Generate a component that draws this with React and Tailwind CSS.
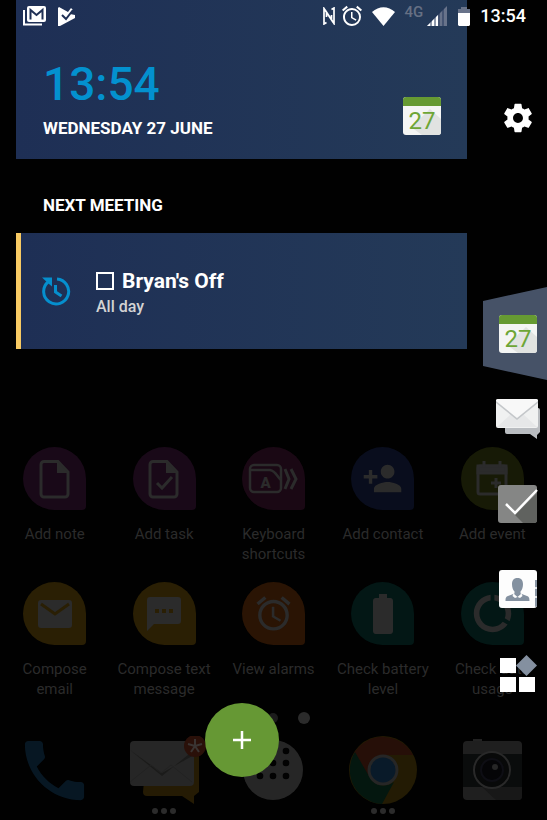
import React, { useState } from "react";
import { MdPersonAdd, MdAlarm, MdDataUsage, MdPhone, MdBatteryFull } from "react-icons/md";

function GearIcon() {
  return (
    <svg width="34" height="34" viewBox="0 0 24 24" fill="currentColor" aria-hidden="true">
      <path d="M19.43 12.98c.04-.32.07-.64.07-.98s-.03-.66-.07-.98l2.11-1.65c.19-.15.24-.42.12-.64l-2-3.46c-.12-.22-.39-.3-.61-.22l-2.49 1c-.52-.4-1.08-.73-1.69-.98l-.38-2.65C14.46 2.18 14.25 2 14 2h-4c-.25 0-.46.18-.49.42l-.38 2.65c-.61.25-1.17.59-1.69.98l-2.49-1c-.23-.09-.49 0-.61.22l-2 3.46c-.13.22-.07.49.12.64l2.11 1.65c-.04.32-.07.65-.07.98s.03.66.07.98l-2.11 1.65c-.19.15-.24.42-.12.64l2 3.46c.12.22.39.3.61.22l2.49-1c.52.4 1.08.73 1.69.98l.38 2.65c.03.24.24.42.49.42h4c.25 0 .46-.18.49-.42l.38-2.65c.61-.25 1.17-.59 1.69-.98l2.49 1c.23.09.49 0 .61-.22l2-3.46c.12-.22.07-.49-.12-.64l-2.11-1.65zM12 15.5c-1.93 0-3.5-1.57-3.5-3.5s1.57-3.5 3.5-3.5 3.5 1.57 3.5 3.5-1.57 3.5-3.5 3.5z" />
    </svg>
  );
}

function CalendarIcon() {
  return (
    <svg width="40" height="40" viewBox="0 0 40 40" aria-hidden="true">
      <rect x="1" y="1" width="38" height="38" rx="3" fill="#f4f5f4" />
      <path d="M28 13 39 23v13a3 3 0 0 1-3 3H20L9 31z" fill="#e1e3e1" />
      <path d="M1 10V4a3 3 0 0 1 3-3h32a3 3 0 0 1 3 3v6z" fill="#669a32" />
      <text x="20" y="33" textAnchor="middle" fontFamily="Roboto, sans-serif" fontSize="24" fill="#6ea636">27</text>
    </svg>
  );
}

function MessagesIcon() {
  return (
    <svg width="44" height="40" viewBox="0 0 44 40" aria-hidden="true">
      <path d="M9 9h33a2 2 0 0 1 2 2v22l-3 3v4l-7-5H11a2 2 0 0 1-2-2z" fill="#b9bcc0" />
      <rect x="0" y="0" width="42" height="29" rx="2" fill="#f0f1f1" />
      <path d="M1 28 15 15h12l14 13z" fill="#e6e7e8" />
      <path d="M0 4 21 21 42 4v-2L40 0H2L0 2z" fill="#c4c7ca" />
      <path d="M0 2a2 2 0 0 1 2-2h38a2 2 0 0 1 2 2L21 19z" fill="#f8f8f8" />
    </svg>
  );
}

function TasksIcon() {
  return (
    <svg width="40" height="40" viewBox="0 0 40 40" aria-hidden="true">
      <rect x="0" y="1" width="39" height="38" rx="3" fill="#858685" />
      <path d="M39 9v27a3 3 0 0 1-3 3H25l-8-8z" fill="#60625f" />
      <path d="M8 20 17 29 39 6" fill="none" stroke="#fff" strokeWidth="2.500" />
    </svg>
  );
}

function PeopleIcon() {
  return (
    <svg width="38" height="38" viewBox="0 0 38 38" aria-hidden="true">
      <rect width="38" height="38" rx="3" fill="#fdfdfd" />
      <path d="M36 10h2v26l-2 1z" fill="#8894a2" />
      <path d="M35 18h3M35 27h3" stroke="#fff" strokeWidth="1.5" />
      <path d="M18.500 8c4 0 5.500 2.700 5.500 6.300 0 3.200-1 5.700-2.500 7.200v2l6.500 2.500c1.800.7 2.500 1.500 2.500 5h-24c0-3.500.7-4.300 2.500-5l6.500-2.500v-2c-1.500-1.500-2.500-4-2.500-7.200 0-3.600 1.500-6.300 5.500-6.300z" fill="#8491a0" />
      <path d="m14.500 23.500 4 3.500 4-3.500 1 2.500-2.500 2-2.500-1-2.500 1-2.500-2z" fill="#fdfdfd" />
    </svg>
  );
}

function WidgetsIcon() {
  return (
    <svg width="38" height="38" viewBox="0 0 38 38" aria-hidden="true">
      <path d="M1 3h16v15H1zM1 22h16v15H1zM20 22h16v15H20z" fill="#fff" />
      <path d="M27.500 0 38 10.500 27.500 21 17 10.500z" fill="#8490a0" />
    </svg>
  );
}

function NoteGlyph({ checked }) {
  return (
    <svg width="32" height="40" viewBox="0 0 32 40" fill="none" stroke="currentColor" strokeWidth="3">
      <path d="M5 2.500h14L29 13v22a3 3 0 0 1-3 3H5a3 3 0 0 1-3-3V5.500a3 3 0 0 1 3-3z" />
      <path d="M18 2.500V14h11L19 3z" fill="currentColor" stroke="none" />
      {checked && <path d="m9 24 5 5 10-11" />}
    </svg>
  );
}

function KeyboardGlyph() {
  return (
    <svg width="50" height="32" viewBox="0 0 50 32" fill="none" stroke="currentColor" strokeWidth="2.500">
      <rect x="2" y="2" width="31" height="27" rx="4" />
      <path d="M2 7h20c6 1 7 7 11 10" />
      <text x="17.500" y="25" textAnchor="middle" fontFamily="Roboto, sans-serif" fontWeight="900" fontSize="15" fill="currentColor" stroke="none">A</text>
      <path d="m37 6 4 10-4 10M43 6l5 10-5 10" strokeWidth="3" />
    </svg>
  );
}

function EventGlyph() {
  return (
    <svg width="32" height="36" viewBox="0 0 32 36" fill="none" stroke="currentColor" strokeWidth="3">
      <rect x="2" y="5" width="28" height="28" rx="2" />
      <path d="M2 5h28v7H2z" fill="currentColor" />
      <path d="M8 0v6M24 0v6M20 17v10M15 22h10" />
    </svg>
  );
}

function MailGlyph() {
  return (
    <svg width="36" height="30" viewBox="0 0 36 30">
      <rect x="1" y="1" width="34" height="28" rx="3" fill="currentColor" />
      <path d="m4 5 14 10L32 5" fill="none" stroke="#2a1f04" strokeWidth="3" />
    </svg>
  );
}

function SmsGlyph() {
  return (
    <svg width="34" height="34" viewBox="0 0 34 34">
      <path d="M3 0h28a3 3 0 0 1 3 3v21a3 3 0 0 1-3 3H7l-7 7V3a3 3 0 0 1 3-3z" fill="currentColor" />
      <path d="M8 12h4v4H8zM15 12h4v4h-4zM22 12h4v4h-4z" fill="#2a1f04" />
    </svg>
  );
}

const shortcuts = [
  { label: "Add note", bg: "bg-[#190918]", icon: <NoteGlyph /> },
  { label: "Add task", bg: "bg-[#190918]", icon: <NoteGlyph checked /> },
  { label: "Keyboard shortcuts", bg: "bg-[#1a0814]", icon: <KeyboardGlyph /> },
  { label: "Add contact", bg: "bg-[#090d1d]", icon: <MdPersonAdd size={41} /> },
  { label: "Add event", bg: "bg-[#171a06]", icon: <EventGlyph /> },
  { label: "Compose email", bg: "bg-[#2a1f04]", icon: <MailGlyph /> },
  { label: "Compose text message", bg: "bg-[#2a1f04]", icon: <SmsGlyph /> },
  { label: "View alarms", bg: "bg-[#2a1404]", icon: <MdAlarm size={41} /> },
  { label: "Check battery level", bg: "bg-[#031715]", icon: <MdBatteryFull size={48} /> },
  { label: "Check data usage", bg: "bg-[#031715]", icon: <MdDataUsage size={45} /> },
];

function Shortcut({ label, bg, icon }) {
  return (
    <button className="flex flex-col items-center">
      <span className={`${bg} flex size-[63px] items-center justify-center rounded-[32px_32px_4px_32px] text-[#2b2b2b]`}>
        {icon}
      </span>
      <span className="mt-[14px] w-[104px] text-[15px] leading-5 text-[#2b2b2b]">{label}</span>
    </button>
  );
}

function DockMessages() {
  return (
    <svg width="84" height="68" viewBox="0 0 84 68" aria-hidden="true">
      <path d="M25 12h48a4 4 0 0 1 4 4v40l-5 4v8l-12-8H25a4 4 0 0 1-4-4z" fill="#251b04" />
      <rect x="8" y="5" width="64" height="45" rx="4" fill="#262626" />
      <path d="M8 14 40 40 72 14v5L40 37z" fill="#1b1b1a" />
      <path d="m8 46 21-17 10 8 10-8 21 17" fill="none" stroke="#222" />
      <circle cx="73" cy="10" r="11" fill="#2a1009" />
      <path d="M73 10V3M73 10l-7-2M73 10l7-2M73 10l-4 6M73 10l4 6" stroke="#3a3432" strokeWidth="2" />
    </svg>
  );
}

function DockDrawer() {
  return (
    <svg width="68" height="68" viewBox="0 0 68 68" aria-hidden="true">
      <circle cx="34" cy="34" r="30" fill="#262626" />
      {[15, 27, 40].map((y) =>
        [21, 34, 47].map((x) => <circle key={`${x}-${y}`} cx={x} cy={y} r="3.300" fill="#020202" />)
      )}
    </svg>
  );
}

function DockChrome() {
  return (
    <svg width="68" height="68" viewBox="0 0 68 68" aria-hidden="true">
      <circle cx="34" cy="34" r="34" fill="#231b04" />
      <path d="M5 17a34 34 0 0 1 59 2H34L20 43z" fill="#260f08" />
      <path d="M6 16 21 42c5 8 15 10 24 4L33 68A34 34 0 0 1 6 16z" fill="#04170f" />
      <circle cx="34" cy="34" r="15.500" fill="#262626" />
      <circle cx="34" cy="34" r="12.500" fill="#091a29" />
    </svg>
  );
}

function DockCamera() {
  return (
    <svg width="68" height="68" viewBox="0 0 68 68" aria-hidden="true">
      <rect x="15" y="3" width="9" height="6" fill="#222" />
      <rect x="5" y="5" width="59" height="59" rx="4" fill="#1f1f1f" />
      <path d="M5 18h59v33H5z" fill="#0a0c0c" />
      <path d="m24 51 14 13h22a4 4 0 0 0 4-4v-9z" fill="#181818" />
      <circle cx="34" cy="34" r="18" fill="#080909" stroke="#292929" strokeWidth="2" />
      <circle cx="34" cy="34" r="11" fill="#050507" stroke="#0e0e14" strokeWidth="2" />
      <circle cx="37" cy="31" r="3" fill="#262626" />
    </svg>
  );
}

const dock = [
  { name: "Phone", icon: <MdPhone size={79} className="shrink-0 text-[#071723]" /> },
  { name: "Messages", icon: <DockMessages />, more: true },
  { name: "Apps", icon: <DockDrawer /> },
  { name: "Chrome", icon: <DockChrome />, more: true },
  { name: "Camera", icon: <DockCamera /> },
];

function HomeScreen() {
  return (
    <div className="col-start-1 row-start-1 flex flex-col justify-end">
      <div className="grid grid-cols-5 items-start gap-y-[18px]">
        {shortcuts.map((s) => (
          <Shortcut key={s.label} {...s} />
        ))}
      </div>
      <div className="flex h-[37px] items-center justify-center gap-5">
        <span className="size-[10px] rounded-full bg-[#1c1c1c]" />
        <span className="size-[10px] rounded-full bg-[#1c1c1c]" />
        <span className="size-3 rounded-full bg-[#2b2b2b]" />
      </div>
      <div className="grid grid-cols-5 pb-[6px]">
        {dock.map((d) => (
          <button key={d.name} aria-label={d.name} className="flex flex-col items-center gap-1">
            <span className="flex h-[68px] items-center justify-center">{d.icon}</span>
            <span className="flex h-[6px] gap-[3px]">
              {d.more && [0, 1, 2].map((i) => <i key={i} className="size-[6px] rounded-full bg-[#2b2b2b]" />)}
            </span>
          </button>
        ))}
      </div>
    </div>
  );
}

function StatusBar() {
  return (
    <div className="z-10 col-start-1 row-start-1 flex h-8 items-center self-start pl-[23px] pr-[21px]">
      <svg width="23" height="20" viewBox="0 0 23 20" fill="none">
        <path d="M1 4v14.500h18" stroke="#fff" strokeWidth="2" />
        <rect x="4" y="0" width="19" height="16" rx="2" fill="#fff" />
        <path d="M7.500 13.500V4l6 5 6-5v9.500" stroke="#1f3055" strokeWidth="2" />
      </svg>
      <svg className="ml-3" width="17" height="19" viewBox="0 0 17 19">
        <path d="M1 0 10 5l3-4 2 2-3 4 5 1v3L2 19H0V1z" fill="#fff" />
        <path d="m4 8 4 4 7-9" fill="none" stroke="#1f3055" strokeWidth="2" />
      </svg>
      <svg className="ml-auto" width="12" height="18" viewBox="0 0 12 18" fill="none" stroke="#fff" strokeWidth="1.700">
        <path d="M3.500 15.500 1 17V1.500L8.500 13V8M8.500 2.500 11 1v15.500L3.500 5v5" />
      </svg>
      <MdAlarm size={24} className="ml-[5px] text-white" />
      <svg className="ml-2" width="23" height="19" viewBox="0 0 23 19">
        <path d="M0 5C7-1.500 16-1.500 23 5L11.500 19z" fill="#fff" />
      </svg>
      <span className="ml-[10px] self-start pt-1 text-[15px] font-medium leading-4 text-[#667084]">4G</span>
      <svg className="ml-1" width="21" height="20" viewBox="0 0 21 20">
        <path d="M0 20 20 0v20z" fill="#68738a" />
        <path d="M0 20 11 9v11z" fill="#fff" />
        <path d="M4 12v8M8 8v12M12 4v16M16 2v18" stroke="#22365a" strokeWidth="1" />
      </svg>
      <svg className="ml-[10px]" width="12" height="19" viewBox="0 0 12 19">
        <path d="M3 0h6v2h3v4H0V2h3z" fill="#68738a" />
        <path d="M0 6h12v12l-1 1H1l-1-1z" fill="#fff" />
      </svg>
      <span className="ml-[10px] text-lg font-medium leading-8 text-white">13:54</span>
    </div>
  );
}

function MeetingCard() {
  const [done, setDone] = useState(false);
  return (
    <section className="flex h-[116px] items-center border-l-[5px] border-[#f8ca63] bg-linear-to-r from-[#1e2f55] to-[#243a58]">
      <svg className="ml-5 shrink-0" width="30" height="30" viewBox="0 0 30 30" fill="none" stroke="#058fce" strokeWidth="3">
        <path d="M16 3a12.500 12.500 0 1 1-9 3" />
        <path d="M1 1.500h10v9L8 8z" fill="#058fce" stroke="none" />
        <path d="M14.500 9v7l6 4" />
      </svg>
      <div className="ml-[25px] pt-1">
        <label className="flex items-center gap-2 text-[21px] font-bold leading-7 text-white">
          <input
            type="checkbox"
            checked={done}
            onChange={() => setDone(!done)}
            className="size-[18px] appearance-none border-2 border-white checked:bg-white"
          />
          Bryan's Off
        </label>
        <p className="text-base font-medium leading-6 text-[#d3d3d3]">All day</p>
      </div>
    </section>
  );
}

const tabs = [
  { name: "Messages", icon: <MessagesIcon /> },
  { name: "Tasks", icon: <TasksIcon /> },
  { name: "Contacts", icon: <PeopleIcon /> },
  { name: "Widgets", icon: <WidgetsIcon /> },
];

function SideRail() {
  return (
    <div className="flex flex-col items-end pt-[99px]">
      <button aria-label="Settings" className="flex h-[38px] w-[58px] items-center justify-center text-white">
        <GearIcon />
      </button>
      <nav className="mt-[154px] flex flex-col items-end">
        <button
          aria-label="Calendar"
          className="-my-1 flex h-[93px] w-16 items-center justify-center bg-[#465267] pl-[6px] [clip-path:polygon(0_15%,100%_0,100%_100%,0_85%)]"
        >
          <CalendarIcon />
        </button>
        {tabs.map((t) => (
          <button key={t.name} aria-label={t.name} className="flex h-[85px] w-[58px] items-center justify-center">
            {t.icon}
          </button>
        ))}
      </nav>
    </div>
  );
}

export default function App() {
  return (
    <div className="grid min-h-screen bg-[#010101] font-[Roboto,sans-serif]">
      <HomeScreen />
      <div className="z-10 col-start-1 row-start-1 grid grid-cols-[1fr_80px] pl-4">
        <main className="flex flex-col">
          <header className="flex items-end justify-between bg-linear-to-r from-[#1e2f55] to-[#243a58] pb-[19px] pl-[27px] pr-[25px] pt-[58px] text-white">
            <div>
              <div className="text-[46px] font-medium leading-[52px] text-[#0391cf]">13:54</div>
              <div className="mt-[6px] text-[17px] font-bold leading-6">WEDNESDAY 27 JUNE</div>
            </div>
            <div className="mb-1">
              <CalendarIcon />
            </div>
          </header>
          <h2 className="pb-4 pl-[27px] pt-[34px] text-[17px] font-bold leading-6 text-white">NEXT MEETING</h2>
          <MeetingCard />
          <button
            aria-label="Add"
            className="mb-[43px] mt-auto flex size-[74px] items-center justify-center self-center rounded-full bg-[#669834]"
          >
            <svg width="20" height="20" viewBox="0 0 20 20">
              <path d="M10 1v18M1 10h18" stroke="#fff" strokeWidth="2.500" />
            </svg>
          </button>
        </main>
        <SideRail />
      </div>
      <StatusBar />
    </div>
  );
}
